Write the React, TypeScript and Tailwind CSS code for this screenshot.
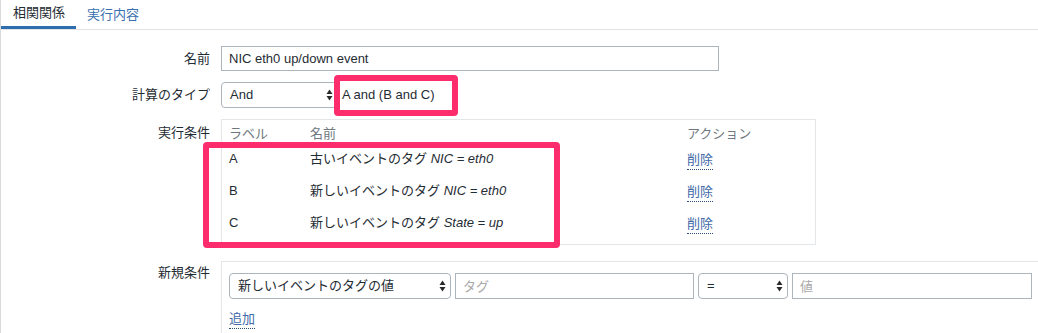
const font = "font-['Liberation_Sans','Noto_Sans_CJK_JP',sans-serif]";

function Arrows() {
  return (
    <svg width="7" height="12" viewBox="0 0 7 12" className="shrink-0">
      <path d="M3.5 0.5 L6.5 5 L0.5 5 Z" fill="#2a2a2a" />
      <path d="M3.5 11.5 L6.5 7 L0.5 7 Z" fill="#2a2a2a" />
    </svg>
  );
}

function FakeSelect({ text, className }: { text: string; className: string }) {
  return (
    <div
      className={
        "flex h-[26px] items-center justify-between rounded-[4px] border border-[#acb4bc] bg-white pl-[8px] pr-[4px] " +
        className
      }
    >
      <span>{text}</span>
      <Arrows />
    </div>
  );
}

function DelLink({ text }: { text: string }) {
  return (
    <span className="inline-block border-b border-dotted border-[#2c4a78] leading-[19px] text-[#4169a8]">
      {text}
    </span>
  );
}

const conditions = [
  { label: "A", tag: "古いイベントのタグ", expr: "NIC = eth0" },
  { label: "B", tag: "新しいイベントのタグ", expr: "NIC = eth0" },
  { label: "C", tag: "新しいイベントのタグ", expr: "State = up" },
];

export default function App() {
  return (
    <div
      className={
        "relative h-[333px] w-[1038px] overflow-hidden border-l border-[#dadada] bg-white text-[13px] text-[#1f2c33] " +
        font
      }
    >
      {/* tabs */}
      <div className="flex h-[30px] border-b border-[#e3e3e3]">
        <div className="flex h-[29px] items-center border-b-[3px] border-[#2f6eae] pl-3 pr-[11px]">相関関係</div>
        <div className="flex h-[29px] items-center px-[11px] text-[#3a6fb0]">実行内容</div>
      </div>

      {/* form */}
      <div className="grid grid-cols-[209px_1fr] gap-x-[11px] pt-[16px]">
        <div className="text-right leading-[25px]">名前</div>
        <input
          readOnly
          value="NIC eth0 up/down event"
          className="h-[25px] w-[498px] border border-[#acb4bc] px-[7px] text-[13px] outline-none"
        />

        <div className="mt-[11px] text-right leading-[25px]">計算のタイプ</div>
        <div className="mt-[11px] flex items-center">
          <FakeSelect text="And" className="h-[25px] w-[117px]" />
          <span className="ml-[4px]">A and (B and C)</span>
        </div>

        <div className="mt-[11px] pt-[4px] text-right leading-[20px]">実行条件</div>
        <div className="mt-[11px] w-[595px] border border-[#e4e7ea] pb-[5px]">
          <div className="flex h-[23px] items-end text-[#6f7880]">
            <div className="w-[88px] pl-[7px]">ラベル</div>
            <div className="w-[377px]">名前</div>
            <div>アクション</div>
          </div>
          {conditions.map((c) => (
            <div key={c.label} className="flex h-[32px] items-center">
              <div className="w-[88px] pl-[7px]">{c.label}</div>
              <div className="w-[377px]">
                {c.tag} <i>{c.expr}</i>
              </div>
              <div className="pt-[1px]">
                <DelLink text="削除" />
              </div>
            </div>
          ))}
        </div>

        <div className="mt-[16px] pt-[2px] text-right leading-[20px]">新規条件</div>
        <div className="mt-[16px] h-[80px] border-l border-t border-[#e4e7ea] pl-[7px] pt-[11px]">
          <div className="flex gap-[4px]">
            <FakeSelect text="新しいイベントのタグの値" className="w-[222px]" />
            <input
              readOnly
              placeholder="タグ"
              className="h-[26px] w-[239px] border border-[#acb4bc] px-[7px] text-[13px] outline-none placeholder:text-[#a9a9a9]"
            />
            <FakeSelect text="=" className="w-[90px]" />
            <input
              readOnly
              placeholder="値"
              className="h-[26px] w-[240px] border border-[#acb4bc] px-[7px] text-[13px] outline-none placeholder:text-[#a9a9a9]"
            />
          </div>
          <div className="mt-[10px]">
            <DelLink text="追加" />
          </div>
        </div>
      </div>

      {/* highlight annotations */}
      <div className="absolute left-[333px] top-[75px] h-[41px] w-[124px] rounded-[4px] border-[6px] border-[#fd2d6d]" />
      <div className="absolute left-[202px] top-[142px] h-[106px] w-[357px] rounded-[4px] border-[6px] border-[#fd2d6d]" />
    </div>
  );
}
